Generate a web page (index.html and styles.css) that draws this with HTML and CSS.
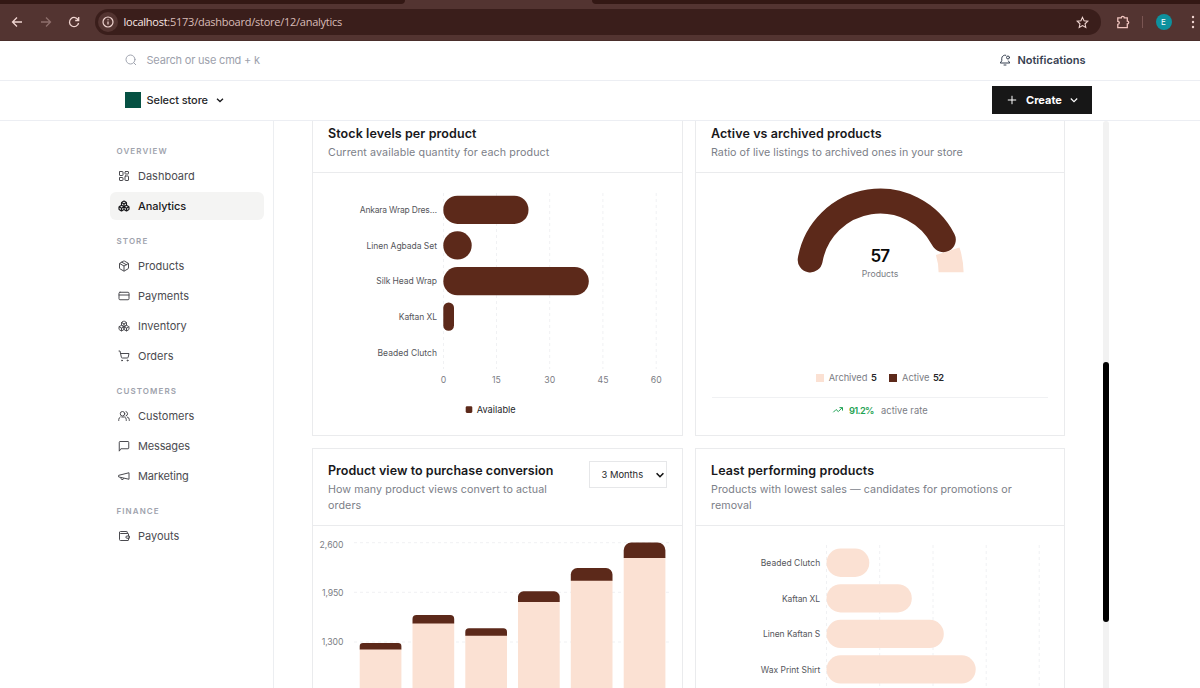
FILE: index.html
```html
<!DOCTYPE html>
<html lang="en">
<head>
<meta charset="utf-8">
<title>Store analytics</title>
<link rel="stylesheet" href="styles.css">
</head>
<body>
<svg class="defs" width="0" height="0">
  <symbol id="boxes" viewBox="0 0 24 24"><path d="M2.97 12.92A2 2 0 0 0 2 14.63v3.24a2 2 0 0 0 .97 1.71l3 1.8a2 2 0 0 0 2.06 0L12 19v-5.5l-5-3-4.03 2.42ZM7 16.5l-4.74-2.85M7 16.5l5-3M7 16.5v5.17M12 13.5V19l3.97 2.38a2 2 0 0 0 2.06 0l3-1.8a2 2 0 0 0 .97-1.71v-3.24a2 2 0 0 0-.97-1.71L17 10.5l-5 3ZM17 16.5l-5-3M17 16.5l4.74-2.85M17 16.5v5.17M7.97 4.42A2 2 0 0 0 7 6.13v4.37l5 3 5-3V6.13a2 2 0 0 0-.97-1.71l-3-1.8a2 2 0 0 0-2.06 0l-3 1.8ZM12 8 7.26 5.15M12 8l4.74-2.85M12 13.5V8"/></symbol>
</svg>

<header class="browser">
  <div class="tabs"><span class="tab-left"></span><span class="tab-right"></span></div>
  <div class="toolbar">
    <svg class="nav" viewBox="0 0 12 12"><path d="M11 6H1.5M6 1.5 1.5 6 6 10.5"/></svg>
    <svg class="nav dim" viewBox="0 0 12 12"><path d="M1 6h9.500M6 1.500 10.500 6 6 10.500"/></svg>
    <svg class="nav" viewBox="0 0 12 12"><path d="M10.300 4.200A4.600 4.600 0 1 0 10.600 7M10.700 1v3.500H7.200"/></svg>
    <div class="address">
      <span class="info"><svg viewBox="0 0 12 12"><circle cx="6" cy="6" r="5"/><path d="M6 5.500v3M6 3.200v1.100"/></svg></span>
      <span class="url"><b>localhost</b>:5173/dashboard/store/12/analytics</span>
      <svg class="star" viewBox="0 0 24 24"><path d="m12 2.500 2.900 6.300 6.900.8-5.100 4.700 1.400 6.900-6.100-3.500-6.100 3.500 1.400-6.900L2.200 9.600l6.900-.8z"/></svg>
    </div>
    <svg class="puzzle" viewBox="0 0 14 14"><path d="M1.800 2.800h3.500a1.500 1.500 0 0 1 3 0h3v3.400a1.400 1.400 0 0 1 0 2.800v3.600H1.800V9.300a1.500 1.500 0 0 0 0-3z"/></svg>
    <span class="sep"></span>
    <span class="avatar">E</span>
    <svg class="kebab" viewBox="0 0 4 14"><circle cx="2" cy="2" r="1.200"/><circle cx="2" cy="7" r="1.200"/><circle cx="2" cy="12" r="1.200"/></svg>
  </div>
</header>

<div class="row search-row">
  <svg class="icon search-icon" viewBox="0 0 24 24"><circle cx="11" cy="11" r="9"/><path d="m21.500 21.500-4-4"/></svg>
  <span class="placeholder">Search or use cmd + k</span>
  <a class="notifications">
    <svg class="icon" viewBox="0 0 24 24"><path d="M10 22h4M13.500 2.400A6.500 6.500 0 0 0 5.500 8.500v5L2.500 18h19l-2.500-4"/><circle cx="18" cy="7" r="3"/></svg>
    <span>Notifications</span>
  </a>
</div>

<div class="row store-row">
  <span class="swatch"></span>
  <span class="select-store">Select store</span>
  <svg class="chev" viewBox="0 0 10 10"><path d="m2 3.800 3 2.800 3-2.800"/></svg>
  <button class="create">
    <svg class="plus" viewBox="0 0 10 10"><path d="M5 .8v8.400M.8 5h8.400"/></svg>
    <span>Create</span>
    <svg class="chev thin" viewBox="0 0 10 10"><path d="m1.800 3.500 3.200 3.200 3.200-3.200"/></svg>
  </button>
</div>

<div class="body">
  <nav class="sidebar">
    <section>
      <h2>OVERVIEW</h2>
      <a><svg class="icon" viewBox="0 0 24 24"><rect x="3" y="3" width="7" height="8" rx="1"/><rect x="14" y="3" width="7" height="5" rx="1"/><rect x="14" y="12" width="7" height="9" rx="1"/><rect x="3" y="15" width="7" height="6" rx="1"/></svg><span>Dashboard</span></a>
      <a class="active"><svg class="icon"><use href="#boxes"/></svg><span>Analytics</span></a>
    </section>
    <section>
      <h2>STORE</h2>
      <a><svg class="icon" viewBox="0 0 24 24"><path d="M11 21.700a2 2 0 0 0 2 0l7-4A2 2 0 0 0 21 16V8a2 2 0 0 0-1-1.730l-7-4a2 2 0 0 0-2 0l-7 4A2 2 0 0 0 3 8v8a2 2 0 0 0 1 1.730zM12 22V12M3.300 7l8.700 5 8.700-5M7.500 4.300l9 5.100"/></svg><span>Products</span></a>
      <a><svg class="icon" viewBox="0 0 24 24"><rect x="2" y="4.500" width="20" height="15" rx="2"/><path d="M2 10h20"/></svg><span>Payments</span></a>
      <a><svg class="icon"><use href="#boxes"/></svg><span>Inventory</span></a>
      <a><svg class="icon" viewBox="0 0 24 24"><circle cx="8" cy="21" r="1"/><circle cx="19" cy="21" r="1"/><path d="M2 2h2l2.700 12.400a2 2 0 0 0 2 1.600h9.700a2 2 0 0 0 2-1.600L22 7H5.100"/></svg><span>Orders</span></a>
    </section>
    <section>
      <h2>CUSTOMERS</h2>
      <a><svg class="icon" viewBox="0 0 24 24"><circle cx="9" cy="7.500" r="4.500"/><path d="M1.500 21v-2a6 6 0 0 1 3-5M16.500 21v-2a6 6 0 0 0-3-5h-6M16 3.200a4.500 4.500 0 0 1 0 8.600M22.500 21v-2a5 5 0 0 0-4-5"/></svg><span>Customers</span></a>
      <a><svg class="icon" viewBox="0 0 24 24"><path d="M2.500 21.500v-17a1.500 1.500 0 0 1 1.500-1.500h16a1.500 1.500 0 0 1 1.500 1.500v11.500a1.500 1.500 0 0 1-1.500 1.500H6.500z"/></svg><span class="tight">Messages</span></a>
      <a><svg class="icon" viewBox="0 0 24 24"><path d="m2 10.500 20-5v13l-20-4.500zM11.600 17a3 3 0 1 1-5.800-1.600"/></svg><span class="tight">Marketing</span></a>
    </section>
    <section>
      <h2>FINANCE</h2>
      <a><svg class="icon" viewBox="0 0 24 24"><path d="M18.500 7V4a1 1 0 0 0-1-1H5a2 2 0 0 0 0 4h15a1 1 0 0 1 1 1v4M21 16v4a1 1 0 0 1-1 1H5a2 2 0 0 1-2-2V5"/><path d="M22 12h-4a2 2 0 0 0 0 4.500h4z"/></svg><span>Payouts</span></a>
    </section>
  </nav>

  <main class="content">
    <div class="grid">
      <article class="card">
        <div class="card-head">
          <div><h3 class="t1">Stock levels per product</h3><p class="s1">Current available quantity for each product</p></div>
        </div>
        <svg class="chart tall" viewBox="313 173 369 262">
          <path class="gridline" d="M443.500 193v176M496.500 193v176M549.700 193v176M602.900 193v176M656.200 193v176"/>
          <g class="dark">
            <rect x="443.300" y="195.700" width="85.200" height="28.300" rx="14.100"/>
            <rect x="443.300" y="231.300" width="28.400" height="28.300" rx="14.100"/>
            <rect x="443.300" y="267" width="145.500" height="28.300" rx="14.100"/>
            <rect x="443.300" y="302.500" width="10.700" height="28.300" rx="5.300"/>
          </g>
          <g class="cat">
            <text x="359.700" y="213" textLength="77.300">Ankara Wrap Dres…</text>
            <text x="366.500" y="248.700" textLength="70.500">Linen Agbada Set</text>
            <text x="376.300" y="284.300" textLength="60.700">Silk Head Wrap</text>
            <text x="398.800" y="320" textLength="38.200">Kaftan XL</text>
            <text x="377.500" y="355.500" textLength="59.500">Beaded Clutch</text>
          </g>
          <g class="tick mid">
            <text x="443.500" y="382.700">0</text><text x="496.500" y="382.700">15</text><text x="549.700" y="382.700">30</text><text x="603" y="382.700">45</text><text x="656.200" y="382.700">60</text>
          </g>
          <rect class="dark" x="465.700" y="406.300" width="6.600" height="6.600" rx="1.300"/>
          <text class="legend" x="476.700" y="412.800" textLength="39">Available</text>
        </svg>
      </article>

      <article class="card">
        <div class="card-head">
          <div><h3 class="t2">Active vs archived products</h3><p class="s2">Ratio of live listings to archived ones in your store</p></div>
        </div>
        <svg class="chart tall" viewBox="696 173 369 262">
          <path class="light" d="M935.900 255l23.600-7.400A83.500 83.500 0 0 1 963.600 272.300H938.600A58.500 58.500 0 0 0 935.900 255z"/>
          <path class="gauge" d="M810.200 259.900A71 71 0 0 1 943.300 239.600"/>
          <text class="total" x="870.500" y="261.600" textLength="19.500">57</text>
          <text class="sub" x="861.800" y="277.200" textLength="36.600">Products</text>
          <rect class="light" x="816" y="374" width="8" height="8"/>
          <text class="key" x="828.700" y="381.300" textLength="38.700">Archived</text>
          <text class="val" x="871" y="381.300" textLength="5.800">5</text>
          <rect class="dark" x="889" y="374" width="8" height="8"/>
          <text class="key" x="902" y="381.300" textLength="27.500">Active</text>
          <text class="val" x="933" y="381.300" textLength="11">52</text>
          <path class="rule" d="M712 397.500h336"/>
          <path class="trend" d="m833.300 412.300 2.800-2.800 2.200 2.100 4-4M839.500 407.600h3v3"/>
          <text class="rate" x="849" y="413.600" textLength="25.400">91.2%</text>
          <text class="key" x="881" y="413.600" textLength="46.600">active rate</text>
        </svg>
      </article>

      <article class="card">
        <div class="card-head">
          <div><h3 class="t3">Product view to purchase conversion</h3><p class="s3">How many product views convert to actual<br>orders</p></div>
          <div class="select"><span>3 Months</span><svg viewBox="0 0 10 10"><path d="m1.600 3.200 3.400 3.500 3.400-3.500"/></svg></div>
        </div>
        <svg class="chart short" viewBox="313 526 369 230">
          <path class="gridline" d="M354 542.700h318M354 592.300h318M354 642h318M354 691.500h318"/>
          <g class="light">
            <rect x="359.700" y="649" width="41.700" height="110"/><rect x="412.500" y="623" width="41.700" height="130"/><rect x="465.300" y="635" width="41.700" height="120"/><rect x="518" y="601.500" width="41.700" height="150"/><rect x="570.800" y="580" width="41.700" height="170"/><rect x="623.700" y="557.500" width="41.700" height="190"/>
          </g>
          <g class="dark">
            <path d="M359.700 649.600v-3.300a3.300 3.300 0 0 1 3.300-3.300h35.100a3.300 3.300 0 0 1 3.300 3.300v3.300z"/>
            <path d="M412.500 623.600v-4.600a4 4 0 0 1 4-4h33.700a4 4 0 0 1 4 4v4.600z"/>
            <path d="M465.300 635.700v-3.700a3.700 3.700 0 0 1 3.700-3.700h34.300a3.700 3.700 0 0 1 3.700 3.700v3.700z"/>
            <path d="M518 602.100v-5.300a5.500 5.500 0 0 1 5.500-5.500h30.700a5.500 5.500 0 0 1 5.500 5.500v5.300z"/>
            <path d="M570.800 580.700v-6.200a6.500 6.500 0 0 1 6.500-6.500h28.700a6.500 6.500 0 0 1 6.500 6.500v6.200z"/>
            <path d="M623.700 558v-7.700a7.800 7.800 0 0 1 7.800-7.800h26.100a7.800 7.800 0 0 1 7.800 7.800v7.700z"/>
          </g>
          <g class="tick">
            <text x="319.500" y="548" textLength="24">2,600</text><text x="322" y="595.500" textLength="21.500">1,950</text><text x="321.700" y="645.200" textLength="21.800">1,300</text>
          </g>
        </svg>
      </article>

      <article class="card">
        <div class="card-head">
          <div><h3 class="t4">Least performing products</h3><p class="s4">Products with lowest sales — candidates for promotions or<br>removal</p></div>
        </div>
        <svg class="chart short" viewBox="696 526 369 230">
          <path class="gridline" d="M826.500 545v190M879.700 545v190M933 545v190M986.200 545v190M1039.200 545v190"/>
          <g class="light">
            <rect x="826.500" y="548.600" width="42.800" height="28.300" rx="14.100"/>
            <rect x="826.500" y="584.200" width="85.300" height="28.300" rx="14.100"/>
            <rect x="826.500" y="619.800" width="117.300" height="28.300" rx="14.100"/>
            <rect x="826.500" y="655.300" width="149.200" height="28.300" rx="14.100"/>
          </g>
          <g class="cat">
            <text x="760.700" y="566" textLength="59.500">Beaded Clutch</text>
            <text x="782" y="601.700" textLength="38">Kaftan XL</text>
            <text x="763" y="637.300" textLength="57.300">Linen Kaftan S</text>
            <text x="760.700" y="673" textLength="59.500">Wax Print Shirt</text>
          </g>
        </svg>
      </article>
    </div>
  </main>

  <div class="scroll"><span class="thumb"></span></div>
</div>
</body>
</html>
```
FILE: styles.css
```css
* { box-sizing: border-box; }
body { margin: 0; width: 1200px; height: 688px; overflow: hidden; background: #fff; font-family: Inter, "Liberation Sans", sans-serif; color: #18181b; }
h2, h3, p { margin: 0; }
svg { display: block; flex: none; }
.defs { position: absolute; }

/* browser chrome */
.browser { height: 41px; background: #533431; border-bottom: 1px solid #4a2e2b; }
.tabs { height: 4px; display: flex; justify-content: space-between; }
.tab-left { width: 405px; background: #331814; border-bottom-right-radius: 6px; }
.tab-right { width: 608px; background: #331814; border-bottom-left-radius: 6px; }
.toolbar { height: 36px; display: flex; align-items: center; padding-left: 11px; }
.nav { width: 12px; height: 12px; margin-right: 16.500px; fill: none; stroke: #f0d5d1; stroke-width: 1.300; }
.nav.dim { stroke: #8e6f6c; }
.address { width: 1006px; height: 26px; margin-left: -2px; border-radius: 13px; background: #3a1e1b; display: flex; align-items: center; padding: 0 12px 0 3px; }
.info { width: 20px; height: 20px; border-radius: 50%; background: #533431; display: flex; align-items: center; justify-content: center; }
.info svg { width: 12px; height: 12px; fill: none; stroke: #f0d5d1; stroke-width: 1.200; }
.url { flex: 1; margin-left: 6px; padding-bottom: 1px; font: 11px "Open Sans", "Noto Sans", sans-serif; color: #d9bcb8; letter-spacing: -.25px; }
.url b { font-weight: 400; color: #fbe9e6; }
.star { width: 13px; height: 13px; fill: none; stroke: #f0d5d1; stroke-width: 2; }
.puzzle { width: 14px; height: 14px; margin-left: 15px; fill: none; stroke: #f0c4be; stroke-width: 1.300; }
.sep { width: 1px; height: 12px; margin-left: 12px; background: #7a5552; }
.avatar { width: 16px; height: 16px; margin-left: 13px; border-radius: 50%; background: #0d919e; color: #fff; font-size: 8px; line-height: 16px; text-align: center; }
.kebab { width: 4px; height: 14px; margin-left: 19px; fill: #f0d5d1; }

/* header rows */
.row { height: 40px; display: flex; align-items: center; padding: 0 108px 1px 125px; border-bottom: 1px solid #eceef3; font-size: 11px; }
.icon { width: 12px; height: 12px; fill: none; stroke: currentColor; stroke-width: 2; stroke-linecap: round; stroke-linejoin: round; }
.search-icon { color: #a1a5b0; }
.placeholder { margin-left: 9.500px; color: #9da1ac; letter-spacing: -.19px; }
.notifications { margin-left: auto; margin-right: 6.500px; display: flex; align-items: center; gap: 6px; font-weight: 600; color: #374151; }
.swatch { width: 16px; height: 16px; background: #065143; }
.select-store { margin-left: 5.500px; font-weight: 500; color: #27272a; letter-spacing: -.09px; }
.chev { width: 10px; height: 10px; margin-left: 7px; fill: none; stroke: #18181b; stroke-width: 1.300; }
.create { margin-left: auto; width: 100px; height: 28px; padding: 0 0 0 15px; border: 0; background: #171717; color: #fff; display: flex; align-items: center; font: 700 11px Inter, sans-serif; }
.create span { margin-left: 9px; }
.plus { width: 10px; height: 10px; fill: none; stroke: #fff; stroke-width: 1; }
.chev.thin { stroke: #fff; stroke-width: 1.100; }

/* layout */
.body { height: 567px; display: flex; overflow: hidden; }
.sidebar { width: 274px; border-right: 1px solid #eceef1; padding: 20px 9px 0 110px; }
.sidebar section { display: flex; flex-direction: column; margin-bottom: 10px; }
.sidebar h2 { height: 20px; padding-left: 6.500px; font-size: 8px; line-height: 20px; font-weight: 600; letter-spacing: 1.080px; color: #a0a3ad; }
.sidebar a { height: 28px; margin: 1px 0; padding-left: 8px; display: flex; align-items: center; gap: 8px; border-radius: 6px; font-size: 11px; color: #4b4b50; }
.sidebar a.active { background: #f4f4f3; color: #18181b; font-weight: 500; letter-spacing: -.08px; }
.active .icon { stroke-width: 2.400; }
.tight { letter-spacing: -.16px; }
.content { width: 829px; padding-left: 38px; overflow: hidden; }
.grid { display: grid; grid-template-columns: 371px 370px; column-gap: 12px; row-gap: 12px; margin-top: -10px; }
.scroll { width: 6px; height: 567px; background: #f2f2f2; padding-top: 241px; border-radius: 3px 3px 0 0; }
.thumb { display: block; height: 260px; border-radius: 3px; background: #000; }

/* cards */
.card { border: 1px solid #eaebed; overflow: hidden; }
.card-head { display: flex; justify-content: space-between; padding: 12px 15px 11px; border-bottom: 1px solid #eaebed; }
.card h3 { font-size: 12.500px; line-height: 20px; font-weight: 600; color: #18181b; white-space: nowrap; }
.card p { margin-top: 1px; font-size: 10.700px; line-height: 16px; color: #7c8088; white-space: nowrap; }
.t1, .t2, .t4 { letter-spacing: .09px; }
.t3 { letter-spacing: .04px; }
.s1 { letter-spacing: .11px; }
.s2 { letter-spacing: .03px; }
.s3 { letter-spacing: .09px; }
.s4 { letter-spacing: .07px; }
.select { width: 78px; height: 27px; margin-right: .5px; flex: none; border: 1px solid #e6e7e9; display: flex; align-items: center; padding-left: 12px; font-size: 9.400px; color: #27272a; }
.select svg { width: 10px; height: 10px; margin-left: auto; margin-right: 1px; fill: none; stroke: #111; stroke-width: 1.600; }

/* charts */
.chart { width: 369px; }
.chart.tall { height: 262px; }
.chart.short { height: 230px; }
.gridline { fill: none; stroke: #f0f1f3; stroke-width: 1; stroke-dasharray: 3 3; }
.dark { fill: #5c291a; }
.light { fill: #fbe1d3; }
.gauge { fill: none; stroke: #5c291a; stroke-width: 25; stroke-linecap: round; }
.cat { font-size: 8.500px; fill: #55565b; }
.tick { font-size: 8.700px; fill: #7b7d84; }
.mid { text-anchor: middle; }
.legend { font-size: 9.200px; fill: #27272a; }
.total { font-size: 17px; font-weight: 600; fill: #0a0a0a; }
.sub { font-size: 8.700px; fill: #7b7d84; }
.key { font-size: 9.300px; fill: #7b7d84; }
.val { font-size: 9.300px; font-weight: 600; fill: #27272a; }
.rate { font-size: 9.300px; font-weight: 600; fill: #1fa355; }
.rule { fill: none; stroke: #f0f1f3; }
.trend { fill: none; stroke: #1fa355; stroke-width: 1; }
```
